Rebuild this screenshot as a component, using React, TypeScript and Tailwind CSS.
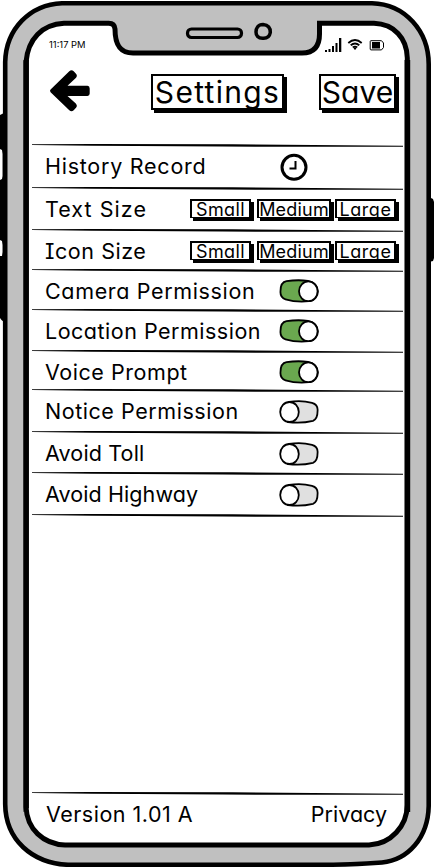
import React from "react";

const inter = "font-['Inter','Liberation_Sans',sans-serif] [font-feature-settings:'cv11','cv08'] whitespace-nowrap text-black";

function PhoneFrame() {
  return (
    <svg className="absolute inset-0" width="434" height="867" viewBox="0 0 434 867" fill="none" aria-hidden="true">
      <path d="M0 115 L4 113 V322 L1.5 320 L0 318 V256 L2 256 L2.6 252 V245 L2 241 L0 240 V180 L2 179 L2.6 176 V154 L2 150 L0 149Z" fill="#000" />
      <path d="M429 197 L433 199 L434 202 V258 L433 261 L429 262Z" fill="#000" />
      <path
        d="M62 3.2 H372 C405 4 428.5 31 428.7 64 V806 C428 838 408 860 382 862.5 Q350 865 310 864.8 H68 C32 863 5.5 840 5.2 804 V62 C6 29 30 4.500 62 3.200Z"
        fill="#c0c0c0" stroke="#000" strokeWidth="4.600"
      />
      <path
        d="M64 23.300 H108 Q114.500 23 115 29 C115 43 119 53 133 53 H302 C314 53 319.500 46 319.500 34 V23.300 H374 C394 24 407 38 407.300 58 V805 C407 826 391 844 369 845 H65 C43 844 27 829 26 807 V62 C28 39 42 24.500 64 23.300Z"
        fill="#fff" stroke="#000" strokeWidth="5"
      />
      <path d="M23.500 60 V812 L28.900 808 V60Z M404.600 60 H410.200 V812 H404.600Z" fill="#000" />
      <rect x="187.500" y="29" width="54" height="8.500" rx="4" stroke="#000" strokeWidth="3.200" />
      <path d="M263 24.500 C268 25 270.500 28 270.300 32.500 C269.500 37 267 38.500 263 38.300 C258 38.500 256 35.500 256 32 C256 28 258 24.500 263 24.500Z" stroke="#000" strokeWidth="3.500" />
    </svg>
  );
}

function Divider() {
  return (
    <svg className="block h-[3px] w-[371px] shrink-0" viewBox="0 0 371 3" aria-hidden="true">
      <path d="M0 0.300 L60 0.100 L200 0.300 L371 1.800 V2.800 L190 2.600 L60 1.800 L0 1.100Z" fill="#000" />
    </svg>
  );
}

function BackArrow() {
  return (
    <svg className="h-[44px] w-[42px]" viewBox="49 69 42 44" aria-hidden="true">
      <path d="M50.600 89.600 L69.300 71.300 Q71.500 69.300 73.700 71.300 L76 73.700 Q77.800 75.800 75.800 78 L67.500 85.800 H87.500 Q89.700 86 89.700 88.500 V93.500 Q89.700 95.800 87.500 96 H67.500 L75.800 103.500 Q77.800 105.800 76 107.800 L73.700 110.300 Q71.500 112.300 69.300 110.300 L50.600 92.200 Q49.400 90.900 50.600 89.600Z" />
    </svg>
  );
}

function StatusIcons() {
  return (
    <svg className="h-[15px] w-[60px]" viewBox="325 38 60 15" fill="none" aria-hidden="true">
      <path d="M325 50h2v2h-2z M328.500 49h2v3h-2z M332 46h2v6h-2z M335.500 43h2v9h-2z M339 38h2.300v14h-2.300z" fill="#000" />
      <path d="M348.300 43 Q355 37 361.700 43 M350.700 45.300 Q355 41.700 359.300 45.300 M352.700 47.400 Q355 45.700 357.300 47.400" stroke="#000" strokeWidth="1.800" />
      <circle cx="355" cy="48.400" r="1.200" fill="#000" />
      <path d="M371 40.700 H381.500 L383.500 43 V47.500 L381.500 49.900 H371 Q370.200 49.900 370.200 49 V41.500 Q370.200 40.700 371 40.700Z" stroke="#000" />
      <path d="M372 42h8v6.500h-8z" fill="#000" />
    </svg>
  );
}

function Clock() {
  return (
    <svg className="h-[28px] w-[28px]" viewBox="0 0 28 28" fill="none" stroke="#000" aria-hidden="true">
      <circle cx="14" cy="14.300" r="12" strokeWidth="3" />
      <path d="M15.500 8 V15.500 H9.500" strokeWidth="2" />
    </svg>
  );
}

function Toggle({ on }: { on: boolean }) {
  return (
    <svg role="switch" aria-checked={on} className="h-[24px] w-[40px]" viewBox="0 0 40 24" stroke="#000" strokeWidth="1.800">
      {on ? (
        <>
          <path d="M7.500 2.200 Q18 0.500 29 1.800 C42 4 42 20.500 30 22.200 Q17 23.500 6.500 20.300 C2.500 19 1.200 15.500 1.500 12 C1.500 7.500 3 3 7.500 2.200Z" fill="#6aa84f" />
          <ellipse cx="29.300" cy="12.300" rx="9.300" ry="9.900" fill="#fff" />
        </>
      ) : (
        <>
          <path d="M10 2 Q22 0 33 2.800 C37.500 4 38.800 7 38.600 10.500 C38.600 15 37.500 19.500 34 20.800 Q22 23.700 9 22Z" fill="#e0e0e0" />
          <ellipse cx="10.500" cy="12" rx="9.300" ry="10" fill="#fff" />
        </>
      )}
    </svg>
  );
}

const box = "flex items-center justify-center bg-white border-black shadow-[3px_3px_0_#000] p-0";

function SizeOptions() {
  const small = `${box} h-[19px] border-2 border-b-[1px] text-[18px] leading-[18px] pt-[2px]`;
  return (
    <div className="ml-auto mr-[7px] mt-[12px] flex h-[19px]">
      <button className={`${small} w-[61px] tracking-[0.4px]`}>Small</button>
      <button className={`${small} ml-[6px] w-[74px] tracking-[0.2px]`}>Medium</button>
      <button className={`${small} ml-[4px] w-[61px] tracking-[0.6px]`}>Large</button>
    </div>
  );
}

type Row = { label: string; height: string; tracking: string; control: React.ReactNode };

const toggle = (on: boolean, top: string) => <div className={`absolute left-[247px] ${top}`}><Toggle on={on} /></div>;

const rows: Row[] = [
  { label: "History Record", height: "h-[43px]", tracking: "tracking-[0.75px]", control: <div className="absolute left-[248px] top-[9px]"><Clock /></div> },
  { label: "Text Size", height: "h-[42px]", tracking: "tracking-[1.05px]", control: <SizeOptions /> },
  { label: "Icon Size", height: "h-[40px]", tracking: "tracking-[0.55px]", control: <SizeOptions /> },
  { label: "Camera Permission", height: "h-[40px]", tracking: "tracking-[0.65px]", control: toggle(true, "top-[10px]") },
  { label: "Location Permission", height: "h-[41px]", tracking: "tracking-[0.5px]", control: toggle(true, "top-[10px]") },
  { label: "Voice Prompt", height: "h-[39px]", tracking: "tracking-[0.55px]", control: toggle(true, "top-[10px]") },
  { label: "Notice Permission", height: "h-[42px]", tracking: "tracking-[0.55px]", control: toggle(false, "top-[11px]") },
  { label: "Avoid Toll", height: "h-[41px]", tracking: "tracking-[0.15px]", control: toggle(false, "top-[11px]") },
  { label: "Avoid Highway", height: "h-[42px]", tracking: "tracking-[0.1px]", control: toggle(false, "top-[11px]") },
];

export default function App() {
  return (
    <div className={`relative h-[867px] w-[434px] overflow-hidden bg-white ${inter}`}>
      <PhoneFrame />
      <div className="relative ml-8 flex h-full w-[371px] flex-col pt-[38px]">
        <div className="flex h-[15px] justify-between pl-[17px] pr-[18px]">
          <span className="mt-px text-[9.400px] leading-[12px]">11:17 PM</span>
          <StatusIcons />
        </div>
        <header className="flex h-[91px] items-start pl-[17px] pt-[16px]">
          <BackArrow />
          <h1 className={`${box} ml-[60px] mt-[5px] h-[36px] w-[133px] border-2 text-[30px] font-normal tracking-[1.3px]`}>Settings</h1>
          <button className={`${box} ml-[35px] mt-[5px] h-[36px] w-[77px] border-2 text-[30px] tracking-[0px]`}>Save</button>
        </header>
        <main className="flex flex-col">
          {rows.map((r) => (
            <section key={r.label} className={`relative flex flex-col ${r.height}`}>
              <Divider />
              <div className="-mt-[3px] flex items-start">
                <span className={`ml-[13px] mt-[10px] text-[21.500px] leading-[24px] ${r.tracking}`}>{r.label}</span>
                {r.control}
              </div>
            </section>
          ))}
          <Divider />
        </main>
        <footer className="mb-[37px] mt-auto flex h-[38px] flex-col">
          <Divider />
          <div className="mt-[7px] flex justify-between pl-[14px] pr-[16px] text-[21.500px] leading-[24px]">
            <span className="tracking-[0.5px]">Version 1.01 A</span>
            <span className="tracking-[0px]">Privacy</span>
          </div>
        </footer>
      </div>
    </div>
  );
}
